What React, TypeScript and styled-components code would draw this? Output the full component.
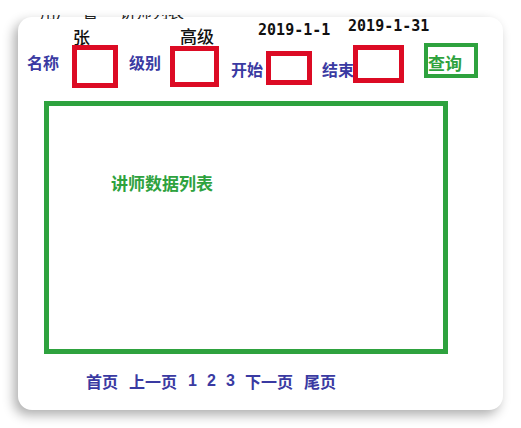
import React from "react";
import styled, { createGlobalStyle } from "styled-components";

const Global = createGlobalStyle`
  html, body { margin: 0; padding: 0; background: #ffffff; }
  body { font-family: "Noto Sans CJK SC", "Noto Sans", sans-serif; }
`;

const BLUE = "#3a3aa2";
const RED = "#dc0b24";
const GREEN = "#2ea23e";

const Page = styled.div`
  position: relative;
  width: 521px;
  height: 428px;
  padding: 17px 0 0 18px;
  box-sizing: border-box;
`;

const Card = styled.div`
  width: 485px;
  height: 393px;
  border-radius: 14px;
  background: #fff;
  box-shadow: -4px 5px 12px rgba(0, 0, 0, 0.32);
  display: flex;
  flex-direction: column;
`;

const ClippedTitle = styled.div`
  position: absolute;
  top: 15px;
  left: 40px;
  height: 4px;
  overflow: hidden;
  display: flex;
  align-items: flex-start;
  gap: 10px;
  color: #222;
  font-size: 16px;
  font-weight: 400;
  line-height: 16px;
`;

const TitlePart = styled.span<{ $ml: number }>`
  display: block;
  margin-left: ${(p) => p.$ml}px;
  margin-top: -12px;
`;

const Toolbar = styled.div`
  display: flex;
  align-items: flex-start;
  height: 84px;
`;

const Label = styled.span<{ $ml: number; $mt: number }>`
  margin-left: ${(p) => p.$ml}px;
  margin-top: ${(p) => p.$mt}px;
  color: ${BLUE};
  font-size: 16px;
  font-weight: 700;
  line-height: 16px;
  white-space: nowrap;
  flex: none;
`;

const BoxCol = styled.div<{ $ml: number; $mt: number; $w: number }>`
  margin-left: ${(p) => p.$ml}px;
  margin-top: ${(p) => p.$mt}px;
  width: ${(p) => p.$w}px;
  flex: none;
  display: flex;
  flex-direction: column;
  align-items: flex-start;
`;

const Caption = styled.span<{ $dx: number; $gap: number; $mono?: boolean }>`
  margin-left: ${(p) => p.$dx}px;
  margin-bottom: ${(p) => p.$gap}px;
  color: #111;
  font-family: ${(p) =>
    p.$mono ? `"DejaVu Sans Mono", "Liberation Mono", monospace` : `"Noto Sans CJK SC", sans-serif`};
  font-size: ${(p) => (p.$mono ? 15 : 17)}px;
  font-weight: ${(p) => (p.$mono ? 700 : 500)};
  line-height: ${(p) => (p.$mono ? 15 : 16)}px;
  white-space: nowrap;
`;

const InputBox = styled.div<{ $h: number }>`
  width: 100%;
  height: ${(p) => p.$h}px;
  box-sizing: border-box;
  border: 5px solid ${RED};
  background: #fff;
`;

const QueryButton = styled.div<{ $ml: number; $mt: number }>`
  margin-left: ${(p) => p.$ml}px;
  margin-top: ${(p) => p.$mt}px;
  width: 54px;
  height: 35px;
  flex: none;
  box-sizing: border-box;
  border: 4px solid ${GREEN};
  color: ${GREEN};
  font-size: 17px;
  font-weight: 700;
  line-height: 17px;
  padding: 7px 0 0 0;
  white-space: nowrap;
`;

const ListBox = styled.div`
  margin-left: 26px;
  width: 404px;
  height: 253px;
  box-sizing: border-box;
  border: 5px solid ${GREEN};
  padding: 68px 0 0 62px;
`;

const ListTitle = styled.div`
  color: ${GREEN};
  font-size: 17px;
  font-weight: 700;
  line-height: 17px;
`;

const Pager = styled.div`
  margin: 19px 0 0 68px;
  display: flex;
  gap: 11px;
  color: ${BLUE};
  font-size: 16px;
  font-weight: 700;
  line-height: 16px;
`;

const PageLink = styled.span<{ $num?: boolean }>`
  display: inline-block;
  white-space: nowrap;
  ${(p) =>
    p.$num
      ? `width: 8px; text-align: center; font-family: "Liberation Sans", sans-serif;`
      : ""}
`;

export default function App() {
  return (
    <Page>
      <Global />
      <Card>
        <Toolbar>
          <Label $ml={9} $mt={37}>名称</Label>
          <BoxCol $ml={13} $mt={12} $w={46}>
            <Caption $dx={1} $gap={0}>张</Caption>
            <InputBox $h={43} />
          </BoxCol>
          <Label $ml={11} $mt={37}>级别</Label>
          <BoxCol $ml={9} $mt={11} $w={49}>
            <Caption $dx={10} $gap={2}>高级</Caption>
            <InputBox $h={41} />
          </BoxCol>
          <Label $ml={12} $mt={44}>开始</Label>
          <BoxCol $ml={3} $mt={6} $w={46}>
            <Caption $dx={-8} $gap={13} $mono>2019-1-1</Caption>
            <InputBox $h={34} />
          </BoxCol>
          <Label $ml={10} $mt={44}>结束</Label>
          <BoxCol $ml={-1} $mt={2} $w={51}>
            <Caption $dx={-5} $gap={11} $mono>2019-1-31</Caption>
            <InputBox $h={38} />
          </BoxCol>
          <QueryButton $ml={20} $mt={26}>查询</QueryButton>
        </Toolbar>
        <ListBox>
          <ListTitle>讲师数据列表</ListTitle>
        </ListBox>
        <Pager>
          <PageLink>首页</PageLink>
          <PageLink>上一页</PageLink>
          <PageLink $num>1</PageLink>
          <PageLink $num>2</PageLink>
          <PageLink $num>3</PageLink>
          <PageLink>下一页</PageLink>
          <PageLink>尾页</PageLink>
        </Pager>
      </Card>
      <ClippedTitle>
        <TitlePart $ml={0}>用户</TitlePart>
        <TitlePart $ml={0}>管</TitlePart>
        <TitlePart $ml={12}>讲师列表</TitlePart>
      </ClippedTitle>
    </Page>
  );
}
